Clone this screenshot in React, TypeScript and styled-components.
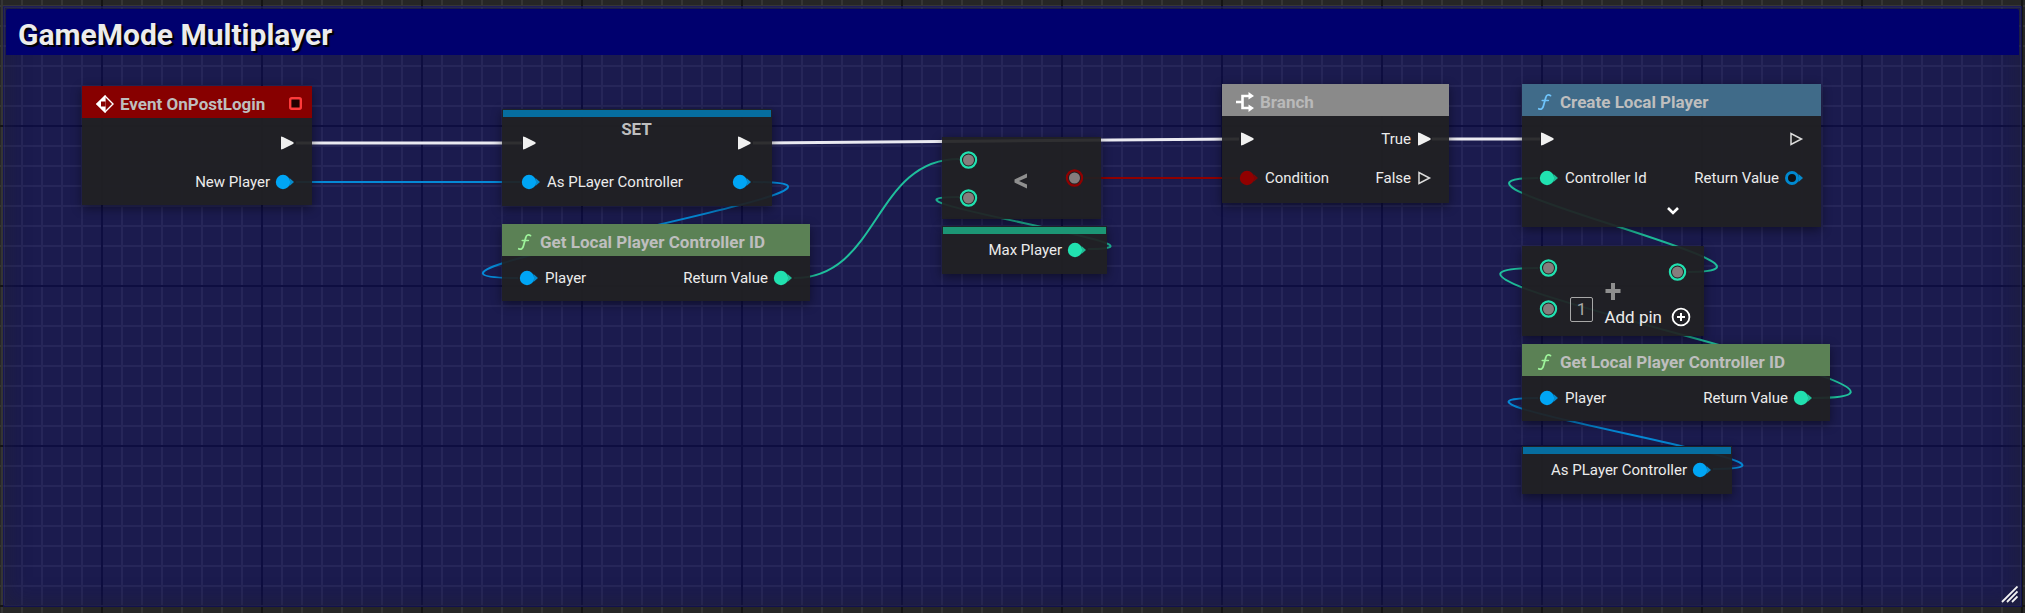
import React from "react";
import styled, { createGlobalStyle } from "styled-components";

const GlobalStyle = createGlobalStyle`
  * { box-sizing: border-box; }
  body {
    margin: 0;
    background: #232323;
    font-family: Roboto, "Liberation Sans", sans-serif;
    color: #ececec;
  }
`;

const BLUE = "#00a5f5";
const GREEN = "#21e1b0";
const RED = "#900000";

/* ---------- graph surface ---------- */

const Graph = styled.main`
  position: relative;
  display: flex;
  min-height: 100vh;
  padding: 6px 3px 6px;
  overflow: hidden;
  background-color: #262626;
  background-image:
    linear-gradient(90deg, #141414 2px, transparent 2px),
    linear-gradient(#141414 2px, transparent 2px),
    linear-gradient(90deg, #353535 2px, transparent 2px),
    linear-gradient(#353535 2px, transparent 2px);
  background-size: 160px 160px, 160px 160px, 20px 20px, 20px 20px;
  background-position: 101px 0, 0 125px, 1px 0, 0 5px;
`;

const Comment = styled.section`
  flex: 1;
  display: flex;
  flex-direction: column;
  justify-content: space-between;
  padding: 2px;
  border: 1px solid rgba(20, 20, 90, 0.5);
  background: rgba(0, 0, 182, 0.28);
  box-shadow: inset 0 0 0 1px rgba(70, 70, 120, 0.25), inset 0 0 24px rgba(38, 38, 38, 0.5);
`;

const CommentTitle = styled.h1`
  margin: 0;
  padding: 8px 12px 3px;
  border-radius: 2px 2px 0 0;
  background: #00006e;
  color: #ececec;
  font-size: 30px;
  line-height: 35px;
  font-weight: 700;
  text-shadow: 2px 2px 1px #000;
`;

const ResizeGrip = styled.svg`
  align-self: flex-end;
  width: 17px;
  height: 17px;
  margin: 0 1px 1px 0;
`;

const Layer = styled.div`
  position: absolute;
  inset: 0;
`;

const WireSheet = styled.svg`
  position: absolute;
  inset: 0;
  width: 100%;
  height: 100%;
  fill: none;
`;

/* ---------- nodes ---------- */

const Node = styled.article<{ $x: number; $y: number; $w: number }>`
  position: absolute;
  left: ${(p) => p.$x}px;
  top: ${(p) => p.$y}px;
  width: ${(p) => p.$w}px;
  background: rgba(32, 32, 34, 0.93);
  box-shadow: 0 3px 10px rgba(0, 0, 0, 0.45);
`;

const NodeHeader = styled.header<{ $color: string }>`
  display: flex;
  align-items: center;
  gap: 6px;
  height: 32px;
  padding: 4px 10px 0 14px;
  background: ${(p) => p.$color};
`;

const NodeTitle = styled.h2<{ $dim?: boolean }>`
  flex: 1;
  margin: 0;
  color: ${(p) => (p.$dim ? "#b9b9b9" : "#bebebe")};
  font-size: 17px;
  line-height: 20px;
  font-weight: 700;
  white-space: nowrap;
`;

const VariableStrip = styled.div<{ $color: string }>`
  height: 8px;
  border: 1px solid #1d2328;
  border-bottom: 0;
  background: ${(p) => p.$color};
`;

const NodeBody = styled.div<{ $pad: string }>`
  padding: ${(p) => p.$pad};
`;

const PinRow = styled.div<{ $tall?: boolean }>`
  display: flex;
  align-items: center;
  justify-content: space-between;
  height: ${(p) => (p.$tall ? 39 : 32)}px;
`;

const PinSlot = styled.div<{ $side: "in" | "out" }>`
  display: flex;
  align-items: center;
  gap: ${(p) => (p.$side === "in" ? 7 : 6)}px;
  margin-left: ${(p) => (p.$side === "out" ? "auto" : "0")};
  font-size: 15px;
  line-height: 20px;
  white-space: nowrap;
`;

const SetBody = styled.div`
  display: grid;
  padding: 6px 21px 5px 20px;
`;

const SetTitle = styled(NodeTitle)`
  grid-area: 1 / 1;
  justify-self: center;
  margin-top: -4px;
`;

const SetRows = styled.div`
  grid-area: 1 / 1;
`;

const OperatorBody = styled.div<{ $pad: string }>`
  display: flex;
  justify-content: space-between;
  padding: ${(p) => p.$pad};
`;

const OperatorFooter = styled.div`
  display: flex;
  justify-content: flex-end;
  margin-top: -38px;
  padding: 0 13px 9px 0;
`;

const OperatorMiddle = styled.div`
  display: flex;
  flex-direction: column;
  align-items: flex-start;
  gap: 8px;
`;

const PinColumn = styled.div<{ $gap: number; $top?: number }>`
  display: flex;
  flex-direction: column;
  gap: ${(p) => p.$gap}px;
  padding-top: ${(p) => p.$top ?? 0}px;
`;

const LiteralRow = styled.div`
  display: flex;
  align-items: center;
  gap: 13px;
  height: 24px;
`;

const LiteralInput = styled.input`
  width: 23px;
  height: 25px;
  padding: 0;
  border: 1px solid #a8a8a8;
  border-radius: 2px;
  background: transparent;
  color: #a8a8a8;
  font: 400 17px/20px Roboto, sans-serif;
  text-align: center;
`;

const AddPinButton = styled.button`
  display: flex;
  align-items: center;
  gap: 9px;
  padding: 0;
  border: 0;
  background: none;
  color: #ececec;
  font: 400 17px/20px Roboto, sans-serif;
  white-space: nowrap;
`;

const ExpandButton = styled.button`
  display: flex;
  justify-content: center;
  width: 100%;
  padding: 10px 0 12px 2px;
  border: 0;
  background: none;
`;

const Glyph = styled.svg`
  display: block;
  flex: none;
  overflow: visible;
`;

/* ---------- pins and icons ---------- */

const ExecPin = ({ open }: { open?: boolean }) => (
  <Glyph width="14" height="14" viewBox="0 0 14 14">
    {open ? (
      <path d="M2 1.5V12.5L12.5 7Z" fill="#202022" stroke="#dcdcdc" strokeWidth="1.5" />
    ) : (
      <path d="M1 .5V13.5L3 13L13.5 7.8V6.2L3 1Z" fill="#f0f0f0" />
    )}
  </Glyph>
);

const DataPin = ({ color, open }: { color: string; open?: boolean }) => (
  <Glyph width="18" height="14" viewBox="0 0 18 14">
    <path d="M13.5 3L18 7L13.5 11Z" fill={color} opacity="0.8" />
    {open ? (
      <circle cx="7" cy="7" r="5.5" fill="#0e1114" stroke="#0089d0" strokeWidth="3" />
    ) : (
      <circle cx="7" cy="7" r="7.2" fill={color} />
    )}
  </Glyph>
);

const WildPin = ({ color }: { color: string }) => (
  <Glyph width="17" height="18" viewBox="0 0 17 18">
    <circle cx="8.5" cy="9" r="7.6" fill="#202022" stroke={color} strokeWidth="2.2" />
    <circle cx="8.5" cy="9" r="5.5" fill="#857d7d" />
  </Glyph>
);

const FunctionIcon = ({ color }: { color: string }) => (
  <Glyph width="18" height="18" viewBox="0 0 18 18" fill="none" stroke={color} strokeLinecap="round">
    <path d="M14.5 2.6C12.6 1.2 10.6 1.8 9.8 4.4L7.4 13C6.8 15.6 5.2 16.8 2.8 15.8" strokeWidth="1.8" />
    <path d="M6.2 7.4H12.4" strokeWidth="1.5" />
  </Glyph>
);

const EventIcon = () => (
  <Glyph width="18" height="18" viewBox="0 0 18 18">
    <path d="M9 1L17 9L9 17L1 9Z" fill="none" stroke="#fff" strokeWidth="1.4" />
    <path d="M9.6 0L0 9L9.6 18Z" fill="#fff" />
    <path d="M5 6.5H9.6V11.5H5Z" fill="#870000" />
  </Glyph>
);

const DelegatePin = () => (
  <Glyph width="13" height="13" viewBox="0 0 13 13">
    <rect x="1.2" y="0.2" width="10.6" height="10.6" rx="1.5" fill="#220000" stroke="#ff3a3a" strokeWidth="2.4" />
  </Glyph>
);

const BranchIcon = () => (
  <Glyph width="18" height="20" viewBox="0 0 18 20">
    <path d="M0 10H6M13 4H6.5V16H13" fill="none" stroke="#fff" strokeWidth="2.6" />
    <path d="M12.5 0L18 4L12.5 7.6ZM12.5 12.4L18 16L12.5 20Z" fill="#fff" />
  </Glyph>
);

const ChevronIcon = () => (
  <Glyph width="12" height="8" viewBox="0 0 12 8">
    <path d="M1 1L6 6L11 1" fill="none" stroke="#fff" strokeWidth="2.6" />
  </Glyph>
);

const CirclePlusIcon = () => (
  <Glyph width="20" height="20" viewBox="0 0 20 20" fill="none" stroke="#fff">
    <circle cx="10" cy="10" r="8.4" strokeWidth="1.8" />
    <path d="M6 10H14M10 6V14" strokeWidth="2" />
  </Glyph>
);

const LessIcon = () => (
  <Glyph width="16" height="16" viewBox="0 0 16 16">
    <path d="M13 .5V4.4L5 8L13 11.6V15.5L.5 9.5V6.5Z" fill="#8f8f8f" />
  </Glyph>
);

const PlusIcon = () => (
  <Glyph width="18" height="16" viewBox="0 0 18 16">
    <path d="M1.5 8H16.5M9 0V17" stroke="#8f8f8f" strokeWidth="4" />
  </Glyph>
);

/* ---------- wires ---------- */

type WireProps = { from: [number, number]; to: [number, number]; pull: number; color: string; width?: number };

const Wire = ({ from, to, pull, color, width = 2 }: WireProps) => (
  <path
    d={`M${from[0]} ${from[1]}C${from[0] + pull} ${from[1]} ${to[0] - pull} ${to[1]} ${to[0]} ${to[1]}`}
    stroke={color}
    strokeWidth={width}
  />
);

const EXEC_WIRE = "#ebebf2";
const BLUE_WIRE = "#0589d6";
const GREEN_WIRE = "#1fbf9c";

const GetControllerIdNode = ({ x, y }: { x: number; y: number }) => (
  <Node $x={x} $y={y} $w={308}>
    <NodeHeader $color="#5b8155">
      <FunctionIcon color="#9df29a" />
      <NodeTitle>Get Local Player Controller ID</NodeTitle>
    </NodeHeader>
    <NodeBody $pad="6px 18px 7px">
      <PinRow>
        <PinSlot $side="in"><DataPin color={BLUE} />Player</PinSlot>
        <PinSlot $side="out">Return Value<DataPin color={GREEN} /></PinSlot>
      </PinRow>
    </NodeBody>
  </Node>
);

type VariableProps = { x: number; y: number; w: number; name: string; strip: string; color: string };

const VariableNode = ({ x, y, w, name, strip, color }: VariableProps) => (
  <Node $x={x} $y={y} $w={w}>
    <VariableStrip $color={strip} />
    <NodeBody $pad="0 21px 8px">
      <PinRow>
        <PinSlot $side="out">{name}<DataPin color={color} /></PinSlot>
      </PinRow>
    </NodeBody>
  </Node>
);

export default function App() {
  return (
    <Graph>
      <GlobalStyle />
      <Comment>
        <CommentTitle>GameMode Multiplayer</CommentTitle>
        <ResizeGrip viewBox="0 0 17 17" stroke="#f2f2f2" strokeWidth="1.8">
          <path d="M1 16L16.5 .5M6 16L16.5 5.5M11 16L16.5 10.5" />
        </ResizeGrip>
      </Comment>

      <Layer>
        <WireSheet>
          <Wire from={[296, 143]} to={[522, 143]} pull={60} color={EXEC_WIRE} width={3} />
          <Wire from={[753, 143]} to={[1239, 139]} pull={150} color={EXEC_WIRE} width={3} />
          <Wire from={[1432, 139]} to={[1540, 139]} pull={40} color={EXEC_WIRE} width={3} />
          <Wire from={[296, 182]} to={[520, 182]} pull={60} color={BLUE_WIRE} />
          <Wire from={[753, 182]} to={[518, 278]} pull={183} color={BLUE_WIRE} />
          <Wire from={[794, 278]} to={[959, 159]} pull={86} color={GREEN_WIRE} />
          <Wire from={[1088, 249]} to={[959, 197]} pull={113} color={GREEN_WIRE} />
          <Wire from={[1084, 178]} to={[1238, 178]} pull={40} color={RED} />
          <Wire from={[1688, 272]} to={[1538, 178]} pull={142} color={GREEN_WIRE} />
          <Wire from={[1813, 398]} to={[1538, 268]} pull={201} color={GREEN_WIRE} />
          <Wire from={[1713, 469]} to={[1538, 398]} pull={149} color={BLUE_WIRE} />
        </WireSheet>

        <Node $x={82} $y={86} $w={230}>
          <NodeHeader $color="#870000">
            <EventIcon />
            <NodeTitle>Event OnPostLogin</NodeTitle>
            <DelegatePin />
          </NodeHeader>
          <NodeBody $pad="5px 18px 4px">
            <PinRow $tall><PinSlot $side="out"><ExecPin /></PinSlot></PinRow>
            <PinRow $tall><PinSlot $side="out">New Player<DataPin color={BLUE} /></PinSlot></PinRow>
          </NodeBody>
        </Node>

        <Node $x={502} $y={109} $w={270}>
          <VariableStrip $color="#066d9f" />
          <SetBody>
            <SetTitle>SET</SetTitle>
            <SetRows>
              <PinRow $tall><PinSlot $side="in"><ExecPin /></PinSlot><PinSlot $side="out"><ExecPin /></PinSlot></PinRow>
              <PinRow $tall>
                <PinSlot $side="in"><DataPin color={BLUE} />As PLayer Controller</PinSlot>
                <PinSlot $side="out"><DataPin color={BLUE} /></PinSlot>
              </PinRow>
            </SetRows>
          </SetBody>
        </Node>

        <GetControllerIdNode x={502} y={224} />

        <Node $x={942} $y={137} $w={159}>
          <OperatorBody $pad="14px 18px 12px">
            <PinColumn $gap={20}><WildPin color={GREEN} /><WildPin color={GREEN} /></PinColumn>
            <PinColumn $gap={0} $top={22}><LessIcon /></PinColumn>
            <PinColumn $gap={0} $top={18}><WildPin color="#900000" /></PinColumn>
          </OperatorBody>
        </Node>

        <VariableNode x={942} y={226} w={165} name="Max Player" strip="#1c9675" color={GREEN} />

        <Node $x={1222} $y={84} $w={227}>
          <NodeHeader $color="#8a8a8a">
            <BranchIcon />
            <NodeTitle $dim>Branch</NodeTitle>
          </NodeHeader>
          <NodeBody $pad="3px 18px 6px">
            <PinRow $tall><PinSlot $side="in"><ExecPin /></PinSlot><PinSlot $side="out">True<ExecPin /></PinSlot></PinRow>
            <PinRow $tall>
              <PinSlot $side="in"><DataPin color={RED} />Condition</PinSlot>
              <PinSlot $side="out">False<ExecPin open /></PinSlot>
            </PinRow>
          </NodeBody>
        </Node>

        <Node $x={1522} $y={84} $w={299}>
          <NodeHeader $color="#406b89">
            <FunctionIcon color="#6ec3fa" />
            <NodeTitle>Create Local Player</NodeTitle>
          </NodeHeader>
          <NodeBody $pad="3px 18px 0">
            <PinRow $tall><PinSlot $side="in"><ExecPin /></PinSlot><PinSlot $side="out"><ExecPin open /></PinSlot></PinRow>
            <PinRow $tall>
              <PinSlot $side="in"><DataPin color={GREEN} />Controller Id</PinSlot>
              <PinSlot $side="out">Return Value<DataPin color={BLUE} open /></PinSlot>
            </PinRow>
            <ExpandButton aria-label="Show advanced pins"><ChevronIcon /></ExpandButton>
          </NodeBody>
        </Node>

        <Node $x={1522} $y={246} $w={182}>
          <OperatorBody $pad="13px 18px 0">
            <PinColumn $gap={20}>
              <WildPin color={GREEN} />
              <LiteralRow>
                <WildPin color={GREEN} />
                <LiteralInput aria-label="Second addend" defaultValue="1" />
              </LiteralRow>
            </PinColumn>
            <PinColumn $gap={0} $top={4}><WildPin color={GREEN} /></PinColumn>
          </OperatorBody>
          <OperatorFooter>
            <OperatorMiddle>
              <PlusIcon />
              <AddPinButton>Add pin<CirclePlusIcon /></AddPinButton>
            </OperatorMiddle>
          </OperatorFooter>
        </Node>

        <GetControllerIdNode x={1522} y={344} />

        <VariableNode x={1522} y={446} w={210} name="As PLayer Controller" strip="#066d9f" color={BLUE} />
      </Layer>
    </Graph>
  );
}
